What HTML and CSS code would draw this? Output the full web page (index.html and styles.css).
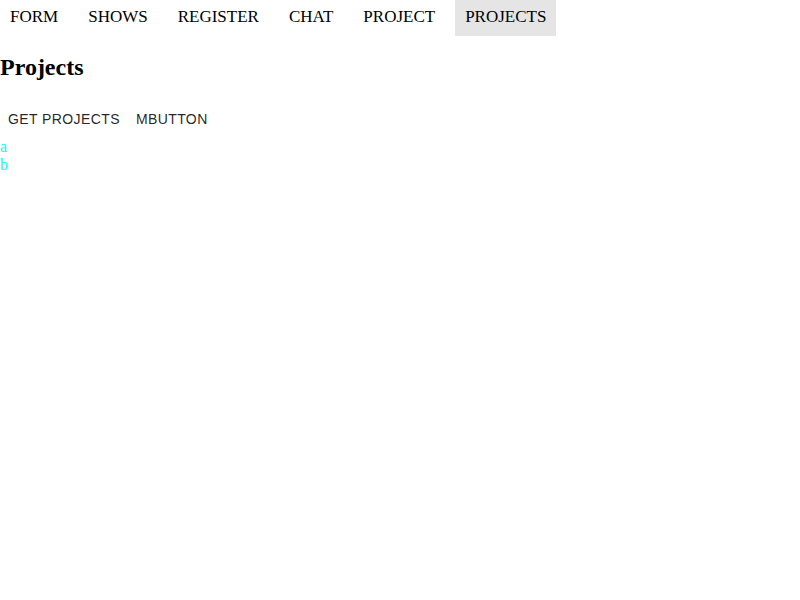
FILE: index.html
```html
<!DOCTYPE html>
<html>
<head>
<meta charset="utf-8">
<link rel="stylesheet" href="styles.css">
</head>
<body>
<nav class="nav">
  <a class="nav-item">FORM</a>
  <a class="nav-item">SHOWS</a>
  <a class="nav-item">REGISTER</a>
  <a class="nav-item">CHAT</a>
  <a class="nav-item">PROJECT</a>
  <a class="nav-item active">PROJECTS</a>
</nav>
<h2 class="title">Projects</h2>
<div class="buttons">
  <button class="btn">GET PROJECTS</button>
  <button class="btn">MBUTTON</button>
</div>
<div class="list">
  <div class="item">a</div>
  <div class="item">b</div>
</div>
</body>
</html>
```
FILE: styles.css
```css
body {
  margin: 0;
  font-family: "Liberation Serif", "Times New Roman", serif;
  background: #fff;
}
.nav {
  display: flex;
  gap: 10px;
}
.nav-item {
  font-size: 17px;
  padding: 7px 10px 9px;
  color: #000;
  line-height: 20px;
}
.nav-item.active {
  background: #e5e5e5;
}
.title {
  font-size: 24px;
  font-weight: bold;
  margin: 18px 0 20px;
}
.buttons {
  display: flex;
}
.btn {
  font-family: "Liberation Sans", Arial, sans-serif;
  font-size: 14px;
  line-height: 24.5px;
  letter-spacing: 0.4px;
  padding: 6px 8px;
  border: none;
  background: transparent;
  color: rgba(0, 0, 0, 0.87);
  text-transform: uppercase;
}
.list {
  color: #00ffff;
  font-size: 16px;
}
.item {
  line-height: 18px;
}
```
